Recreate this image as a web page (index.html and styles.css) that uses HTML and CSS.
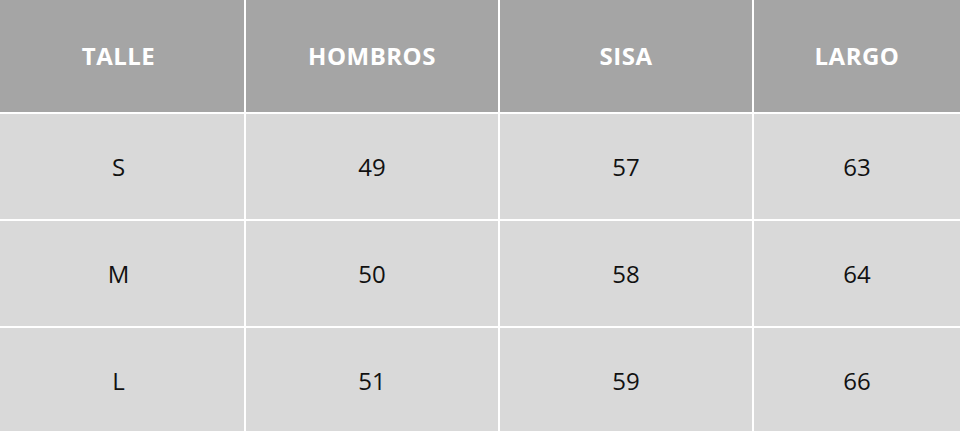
FILE: index.html
```html
<!DOCTYPE html>
<html lang="es">
<head>
<meta charset="utf-8">
<link rel="stylesheet" href="styles.css">
</head>
<body>
<div class="table">
  <div class="cell head first">TALLE</div>
  <div class="cell head">HOMBROS</div>
  <div class="cell head">SISA</div>
  <div class="cell head">LARGO</div>
  <div class="cell first">S</div>
  <div class="cell">49</div>
  <div class="cell">57</div>
  <div class="cell">63</div>
  <div class="cell first">M</div>
  <div class="cell">50</div>
  <div class="cell">58</div>
  <div class="cell">64</div>
  <div class="cell first">L</div>
  <div class="cell">51</div>
  <div class="cell">59</div>
  <div class="cell">66</div>
</div>
</body>
</html>
```
FILE: styles.css
```css
html, body {
  margin: 0;
  padding: 0;
  background: #ffffff;
  overflow: hidden;
}
.table {
  display: grid;
  grid-template-columns: 244px 252px 252px 206px;
  grid-template-rows: 112px 105px 105px 105px;
  gap: 2px;
  width: 960px;
  height: 431px;
  background: #ffffff;
  font-family: "Open Sans", "Liberation Sans", sans-serif;
}
.cell {
  display: flex;
  align-items: center;
  justify-content: center;
  background: #d9d9d9;
  color: #111111;
  font-size: 24px;
}
.first {
  padding-right: 7px;
}
.head {
  background: #a5a5a5;
  color: #ffffff;
  font-weight: 700;
  letter-spacing: 0.5px;
  padding-bottom: 2px;
}
```
